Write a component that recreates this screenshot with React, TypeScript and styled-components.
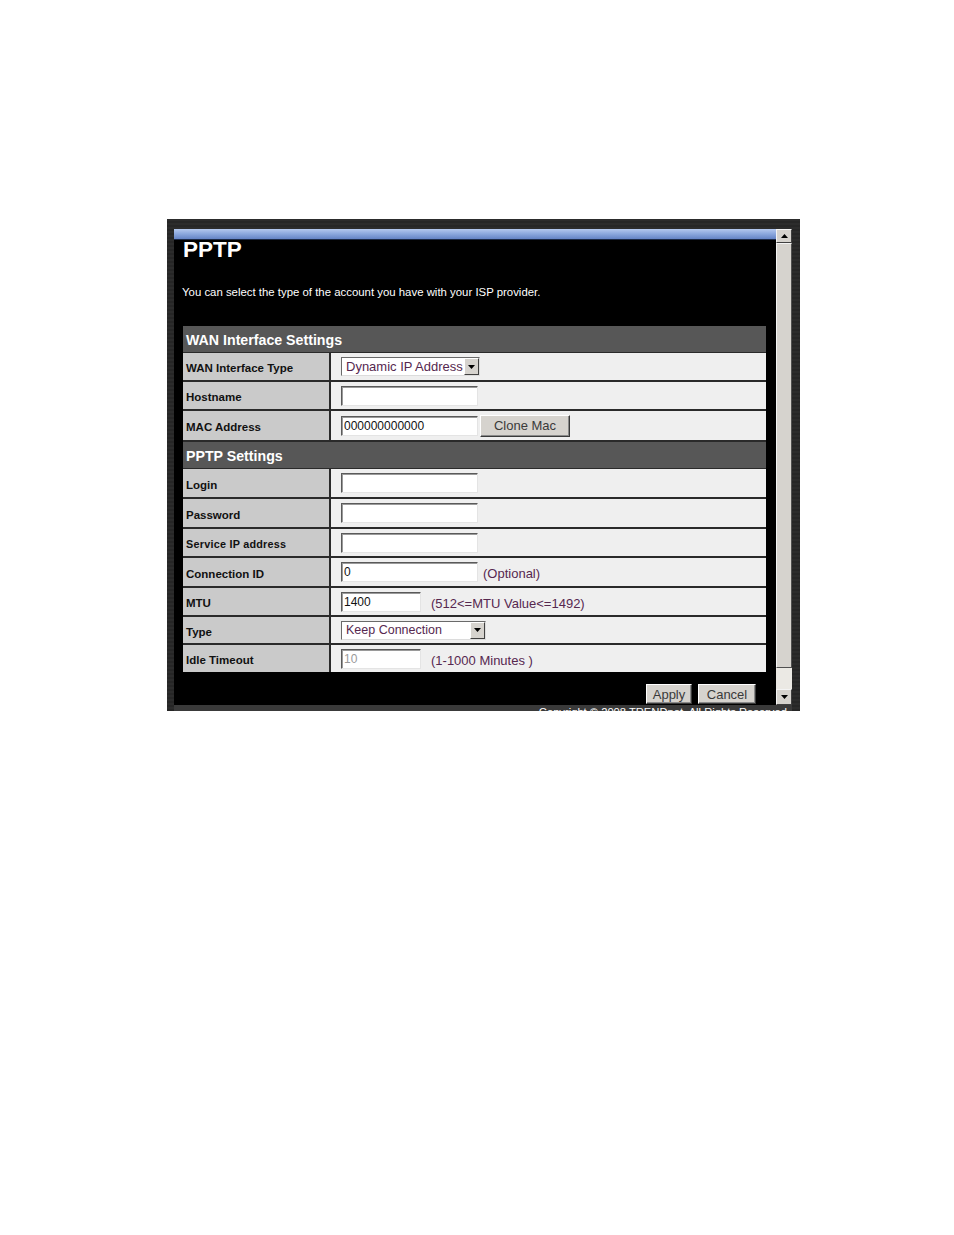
import React from "react";
import styled, { createGlobalStyle } from "styled-components";

const GlobalStyle = createGlobalStyle`
  html, body { margin: 0; padding: 0; background: #ffffff; }
  body { font-family: "Liberation Sans", Arial, sans-serif; }
`;

const Page = styled.div`
  padding: 219px 0 0 167px;
  min-height: 1235px;
  box-sizing: border-box;
`;

const Frame = styled.div`
  width: 633px;
  height: 492px;
  box-sizing: border-box;
  padding: 10px 8px 0 7px;
  background: repeating-linear-gradient(180deg, #2c2c2c 0px, #2c2c2c 2px, #262626 2px, #262626 4px);
  display: flex;
  flex-direction: column;
`;

const Window = styled.div`
  display: flex;
  height: 476px;
`;

const Content = styled.div`
  width: 602px;
  background: #000;
  overflow: hidden;
  display: flex;
  flex-direction: column;
`;

const BlueBar = styled.div`
  height: 11px;
  background: linear-gradient(180deg, #b4c8ee 0%, #8eaadf 45%, #6584c6 100%);
  border-bottom: 1px solid #1c2a48;
  box-sizing: border-box;
`;

const Title = styled.h1`
  margin: 0;
  padding: 1px 0 0 9px;
  height: 17px;
  line-height: 17px;
  font-size: 22.5px;
  font-weight: bold;
  color: #ffffff;
  font-family: "Liberation Sans", Arial, sans-serif;
`;

const Desc = styled.p`
  margin: 27px 0 0;
  padding-left: 8px;
  line-height: 14px;
  font-size: 11.4px;
  color: #ffffff;
  font-family: "Liberation Sans", Arial, sans-serif;
`;

const Table = styled.div`
  margin: 27px 0 0 9px;
  width: 583px;
  background: #2a2a2a;
  display: flex;
  flex-direction: column;
`;

const SectionHeader = styled.div<{ $gap?: number }>`
  height: 26px;
  margin-top: ${(p) => p.$gap ?? 0}px;
  background: #575757;
  color: #ffffff;
  font-family: "Liberation Sans", Arial, sans-serif;
  font-weight: bold;
  font-size: 14.2px;
  display: flex;
  align-items: center;
  padding-left: 3px;
  padding-top: 2px;
  box-sizing: border-box;
`;

const Row = styled.div<{ $h: number; $gap: number }>`
  display: flex;
  height: ${(p) => p.$h}px;
  margin-top: ${(p) => p.$gap}px;
`;

const Label = styled.div<{ $small?: boolean }>`
  width: 146px;
  margin-right: 2px;
  background: #cacaca;
  color: #111;
  font-family: "Liberation Sans", Arial, sans-serif;
  font-weight: bold;
  font-size: ${(p) => (p.$small ? "10.8px" : "11.5px")};
  letter-spacing: ${(p) => (p.$small ? "0.25px" : "0")};
  display: flex;
  align-items: center;
  padding: 3px 0 0 3px;
  box-sizing: border-box;
`;

const Value = styled.div`
  flex: 1;
  background: #efefef;
  display: flex;
  align-items: center;
  padding-left: 10px;
`;

const TextInput = styled.input<{ $w: number }>`
  width: ${(p) => p.$w}px;
  height: 20px;
  box-sizing: border-box;
  margin: 0;
  padding: 0 2px;
  border: 1px solid;
  border-color: #5a5a5a #e4e4e4 #e4e4e4 #5a5a5a;
  box-shadow: inset 1px 1px 0 #9a9a9a;
  background: #ffffff;
  font-family: "Liberation Sans", Arial, sans-serif;
  font-size: 12px;
  color: #111;
  outline: none;
  &:disabled {
    color: #9a9a9a;
    background: #ffffff;
  }
`;

const SelectBox = styled.div<{ $w: number }>`
  width: ${(p) => p.$w}px;
  height: 19px;
  box-sizing: border-box;
  border: 1px solid;
  border-color: #6a6a6a #dcdcdc #dcdcdc #6a6a6a;
  background: #ffffff;
  display: flex;
  align-items: center;
  justify-content: space-between;
  padding-left: 4px;
`;

const SelectText = styled.span<{ $size: number }>`
  font-family: "Liberation Sans", Arial, sans-serif;
  font-size: ${(p) => p.$size}px;
  color: #56284f;
  white-space: nowrap;
`;

const ArrowBtn = styled.span`
  width: 15px;
  height: 17px;
  box-sizing: border-box;
  background: #d6d3ce;
  border: 1px solid;
  border-color: #ffffff #404040 #404040 #ffffff;
  display: flex;
  align-items: center;
  justify-content: center;
`;

const Hint = styled.span<{ $ml: number }>`
  margin-left: ${(p) => p.$ml}px;
  padding-top: 3px;
  font-family: "Liberation Sans", Arial, sans-serif;
  font-size: 13px;
  color: #56284f;
  white-space: nowrap;
`;

const PushButton = styled.button<{ $w: number; $h: number }>`
  width: ${(p) => p.$w}px;
  height: ${(p) => p.$h}px;
  box-sizing: border-box;
  margin: 0;
  padding: 0;
  background: #d6d3ce;
  border: 1px solid;
  border-color: #ffffff #3a3a3a #3a3a3a #ffffff;
  box-shadow: inset -1px -1px 0 #8a8a8a;
  font-family: "Liberation Sans", Arial, sans-serif;
  font-size: 13px;
  color: #3a3a3a;
  cursor: pointer;
`;

const CloneButton = styled(PushButton)`
  margin-left: 2px;
`;

const ButtonRow = styled.div`
  display: flex;
  justify-content: flex-end;
  gap: 6px;
  margin-top: 12px;
  padding-right: 20px;
`;

const Scrollbar = styled.div`
  width: 16px;
  display: flex;
  flex-direction: column;
  background: #ebe9e4;
`;

const ScrollButton = styled.div<{ $h: number }>`
  height: ${(p) => p.$h}px;
  box-sizing: border-box;
  background: #d6d3ce;
  border: 1px solid;
  border-color: #f4f4f4 #404040 #404040 #f4f4f4;
  display: flex;
  align-items: center;
  justify-content: center;
`;

const Thumb = styled.div`
  height: 425px;
  box-sizing: border-box;
  background: #d6d3ce;
  border: 1px solid;
  border-color: #f4f4f4 #505050 #505050 #f4f4f4;
`;

const Track = styled.div`
  flex: 1;
  background: #ebe9e4;
`;

const Footer = styled.div`
  height: 6px;
  overflow: hidden;
  background: #3a3a3a;
  text-align: right;
  padding-right: 2px;
  font-family: "Liberation Sans", Arial, sans-serif;
  font-size: 11.2px;
  line-height: 14px;
  color: #ffffff;
  white-space: nowrap;
`;

const Tri = ({ dir }: { dir: "up" | "down" }) => (
  <svg width="7" height="4" viewBox="0 0 7 4">
    {dir === "up" ? (
      <polygon points="0,4 7,4 3.5,0" fill="#000" />
    ) : (
      <polygon points="0,0 7,0 3.5,4" fill="#000" />
    )}
  </svg>
);

const Select = ({ w, text, size }: { w: number; text: string; size: number }) => (
  <SelectBox $w={w}>
    <SelectText $size={size}>{text}</SelectText>
    <ArrowBtn>
      <Tri dir="down" />
    </ArrowBtn>
  </SelectBox>
);

export default function App() {
  return (
    <>
      <GlobalStyle />
      <Page>
        <Frame>
          <Window>
            <Content>
              <BlueBar />
              <Title>PPTP</Title>
              <Desc>You can select the type of the account you have with your ISP provider.</Desc>
              <Table>
                <SectionHeader>WAN Interface Settings</SectionHeader>
                <Row $h={27} $gap={1}>
                  <Label>WAN Interface Type</Label>
                  <Value>
                    <Select w={139} text="Dynamic IP Address" size={13} />
                  </Value>
                </Row>
                <Row $h={27} $gap={2}>
                  <Label>Hostname</Label>
                  <Value>
                    <TextInput $w={137} defaultValue="" />
                  </Value>
                </Row>
                <Row $h={29} $gap={2}>
                  <Label>MAC Address</Label>
                  <Value>
                    <TextInput $w={137} defaultValue="000000000000" />
                    <CloneButton $w={90} $h={22}>Clone Mac</CloneButton>
                  </Value>
                </Row>
                <SectionHeader $gap={2}>PPTP Settings</SectionHeader>
                <Row $h={28} $gap={1}>
                  <Label>Login</Label>
                  <Value>
                    <TextInput $w={137} defaultValue="" />
                  </Value>
                </Row>
                <Row $h={28} $gap={2}>
                  <Label>Password</Label>
                  <Value>
                    <TextInput $w={137} type="password" defaultValue="" />
                  </Value>
                </Row>
                <Row $h={27} $gap={2}>
                  <Label $small>Service IP address</Label>
                  <Value>
                    <TextInput $w={137} defaultValue="" />
                  </Value>
                </Row>
                <Row $h={28} $gap={2}>
                  <Label>Connection ID</Label>
                  <Value>
                    <TextInput $w={137} defaultValue="0" />
                    <Hint $ml={5}>(Optional)</Hint>
                  </Value>
                </Row>
                <Row $h={27} $gap={2}>
                  <Label>MTU</Label>
                  <Value>
                    <TextInput $w={80} defaultValue="1400" />
                    <Hint $ml={10}>(512&lt;=MTU Value&lt;=1492)</Hint>
                  </Value>
                </Row>
                <Row $h={26} $gap={2}>
                  <Label>Type</Label>
                  <Value>
                    <Select w={145} text="Keep Connection" size={12.5} />
                  </Value>
                </Row>
                <Row $h={27} $gap={2}>
                  <Label>Idle Timeout</Label>
                  <Value>
                    <TextInput $w={80} defaultValue="10" disabled />
                    <Hint $ml={10}>(1-1000 Minutes )</Hint>
                  </Value>
                </Row>
              </Table>
              <ButtonRow>
                <PushButton $w={46} $h={20}>Apply</PushButton>
                <PushButton $w={58} $h={20}>Cancel</PushButton>
              </ButtonRow>
            </Content>
            <Scrollbar>
              <ScrollButton $h={14}>
                <Tri dir="up" />
              </ScrollButton>
              <Thumb />
              <Track />
              <ScrollButton $h={16}>
                <Tri dir="down" />
              </ScrollButton>
            </Scrollbar>
          </Window>
          <Footer>Copyright © 2008 TRENDnet. All Rights Reserved.</Footer>
        </Frame>
      </Page>
    </>
  );
}
